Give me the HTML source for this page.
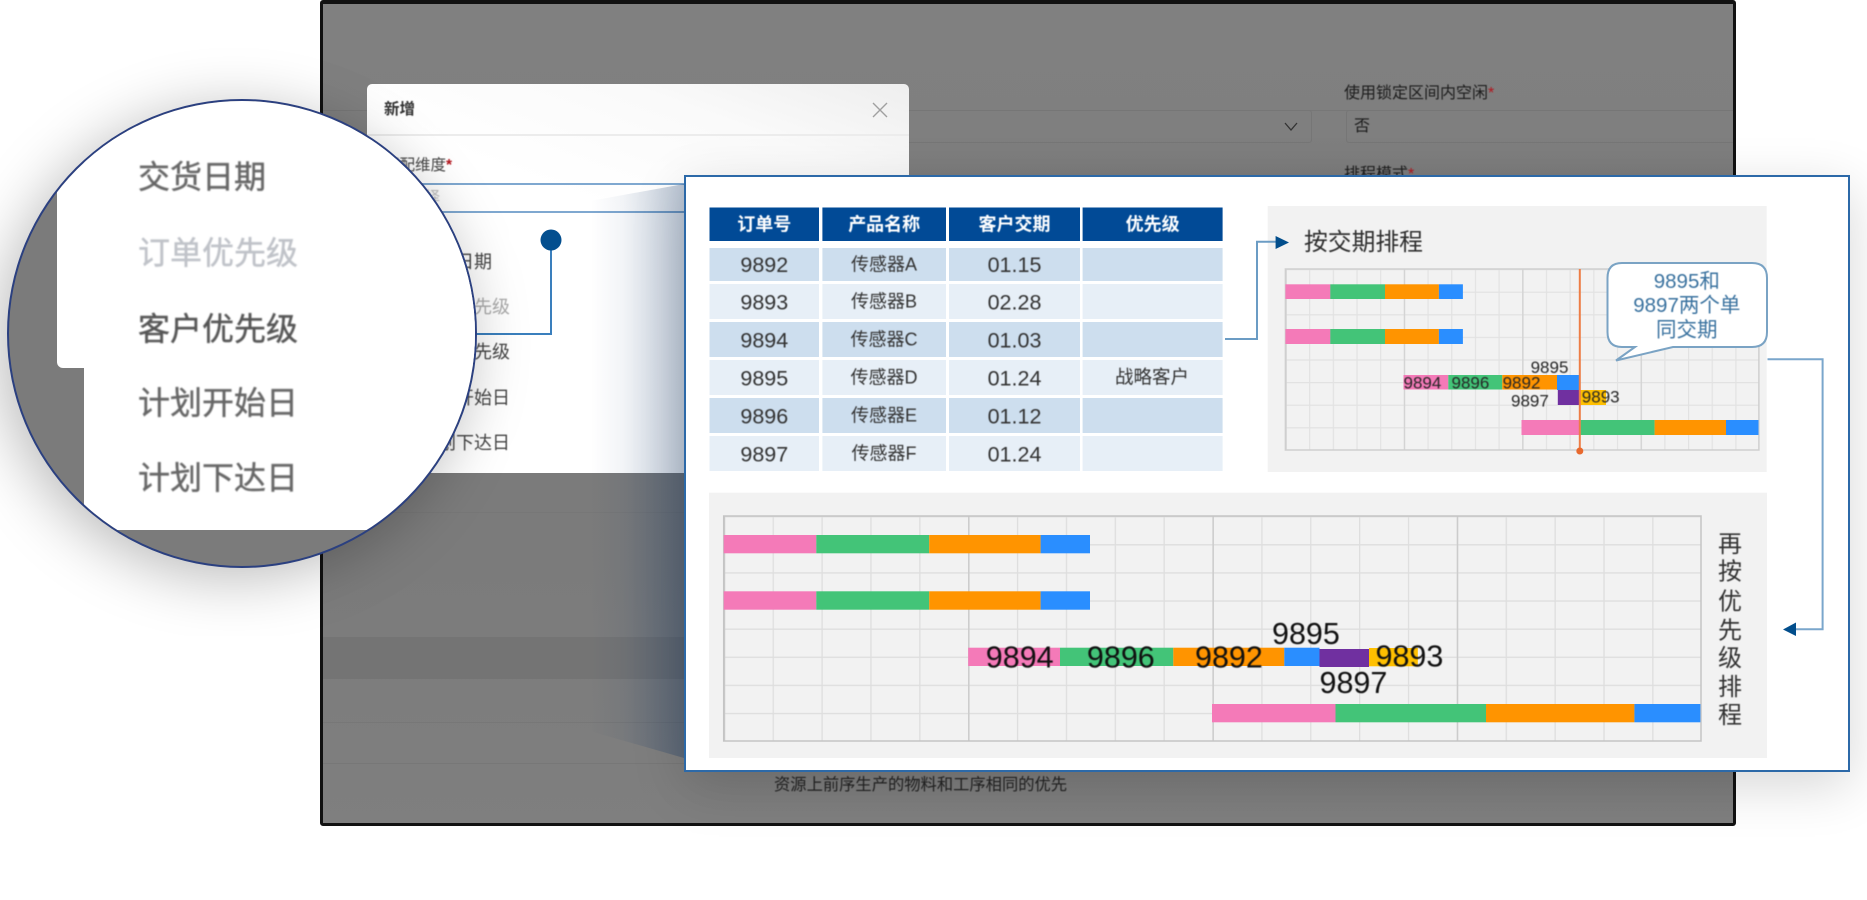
<!DOCTYPE html>
<html lang="zh-CN">
<head>
<meta charset="utf-8">
<title>排程</title>
<style>
html,body{margin:0;padding:0;background:#fff}
body{width:1867px;height:900px;position:relative;overflow:hidden;font-family:"Liberation Sans","Noto Sans CJK SC",sans-serif}
.abs{position:absolute}
#dark{left:320px;top:0;width:1416px;height:826px;box-sizing:border-box;border:3px solid #111;border-top-width:4px;border-radius:3px;background:linear-gradient(#808080 0,#7f7f7f 130px,#7a7a7a 200px,#7b7b7b 560px,#7f7f7f 826px);z-index:1;overflow:hidden}
.t{position:absolute;white-space:nowrap;line-height:1;filter:blur(.4px)}
.rs{color:#b3141c}
#modal{left:367px;top:84px;width:542px;height:389px;background:linear-gradient(200deg,#eeeeee 0,#fafafa 18%,#fff 40%);border-radius:5px 5px 0 0;z-index:2;overflow:hidden}
#funnel{left:0;top:0;z-index:3}
#circle{left:7px;top:99px;width:470px;height:469px;box-sizing:border-box;border:2.5px solid #2b4080;border-radius:50%;box-shadow:-8px 10px 60px rgba(0,0,0,.27);background:#7b7b7b;overflow:hidden;z-index:4}
.c{position:absolute;white-space:nowrap;line-height:1;font-size:32px;left:129px;filter:blur(.7px);-webkit-text-stroke:.4px currentColor}
#panel{left:684px;top:175px;width:1166px;height:597px;box-sizing:border-box;border:2px solid #2c69a8;background:#fff;box-shadow:0 14px 50px rgba(0,0,0,.16);z-index:6}
#art{left:0;top:0;z-index:7}
svg text{font-family:"Liberation Sans","Noto Sans CJK SC",sans-serif}
.blurred{filter:blur(.4px)}
</style>
</head>
<body>

<div id="dark" class="abs">
  <div class="abs" style="left:0;right:0;top:106px;height:1px;background:#777"></div>
  <div class="abs" style="left:0;right:0;top:633px;height:42px;background:#747474"></div>
  <div class="abs" style="left:0;right:0;top:508px;height:1px;background:#777"></div>
  <div class="abs" style="left:0;right:0;top:718px;height:1px;background:#777"></div>
  <div class="abs" style="left:0;right:0;top:759px;height:1px;background:#777"></div>
  <div class="t" style="left:1021px;top:82px;font-size:16px;color:#1c1c1c">使用锁定区间内空闲<span class="rs">*</span></div>
  <div class="abs" style="left:1023px;top:106px;width:500px;height:33px;box-sizing:border-box;border:1px solid #767676;border-radius:3px"></div>
  <div class="abs" style="left:570px;top:106px;width:419px;height:33px;box-sizing:border-box;border:1px solid #767676;border-radius:3px"></div>
  <svg class="abs" style="left:960px;top:117px" width="16" height="12"><path d="M2 2 L8 9 L14 2" fill="none" stroke="#333" stroke-width="1.3"/></svg>
  <div class="t" style="left:1031px;top:115px;font-size:16px;color:#1c1c1c">否</div>
  <div class="t" style="left:1021px;top:163px;font-size:16px;color:#1c1c1c">排程模式<span class="rs">*</span></div>
  <div class="t" style="left:451px;top:773px;font-size:16.3px;color:#222">资源上前序生产的物料和工序相同的优先</div>
</div>

<div id="modal" class="abs">
  <div class="t" style="left:17px;top:18px;font-size:15.5px;font-weight:bold;color:#333">新增</div>
  <svg class="abs" style="left:505px;top:18px" width="16" height="16"><path d="M1 1 L15 15 M15 1 L1 15" stroke="#a0a0a0" stroke-width="1.4"/></svg>
  <div class="abs" style="left:0;right:0;top:50px;height:2px;background:#ececec"></div>
  <div class="t" style="left:17px;top:74px;font-size:15.5px;color:#444">匹配维度<span class="rs" style="font-weight:bold">*</span></div>
  <div class="abs" style="left:17px;top:99px;width:520px;height:30px;box-sizing:border-box;border:2px solid #7fa8d0;border-radius:2px"></div>
  <div class="t" style="left:28px;top:106px;font-size:15px;color:#bbb">请选择</div>
  <div class="t" style="left:53px;top:169px;font-size:18px;color:#444">交货日期</div>
  <div class="t" style="left:53px;top:214px;font-size:18px;color:#aaa">订单优先级</div>
  <div class="t" style="left:53px;top:259px;font-size:18px;color:#444">客户优先级</div>
  <div class="t" style="left:53px;top:305px;font-size:18px;color:#444">计划开始日</div>
  <div class="t" style="left:53px;top:350px;font-size:18px;color:#444">计划下达日</div>
</div>

<svg id="funnel" class="abs" width="1867" height="900">
  <defs>
    <linearGradient id="fg" gradientUnits="userSpaceOnUse" x1="590" y1="0" x2="684" y2="0">
      <stop offset="0" stop-color="#002b63" stop-opacity="0"/>
      <stop offset=".35" stop-color="#002b63" stop-opacity=".05"/>
      <stop offset=".6" stop-color="#002b63" stop-opacity=".13"/>
      <stop offset="1" stop-color="#002b63" stop-opacity=".27"/>
    </linearGradient>
  </defs>
  <polygon points="684,184 590,201 590,731 684,758" fill="url(#fg)"/>
  <path d="M551 240 V334 H470" fill="none" stroke="#3a7fbd" stroke-width="2"/>
  <circle cx="551" cy="240" r="10.5" fill="#044f8f"/>
</svg>

<div id="circle" class="abs">
  <div class="abs" style="left:48px;top:-5px;width:440px;height:272px;background:#fff;border-radius:0 0 0 6px"></div>
  <div class="abs" style="left:75px;top:25px;width:420px;height:404px;background:#fff"></div>
  <div class="c" style="top:60px;color:#666">交货日期</div>
  <div class="c" style="top:136px;color:#bfc2c8">订单优先级</div>
  <div class="c" style="top:212px;color:#555">客户优先级</div>
  <div class="c" style="top:286px;color:#666">计划开始日</div>
  <div class="c" style="top:361px;color:#666">计划下达日</div>
</div>

<div id="panel" class="abs"></div>

<svg id="art" class="abs" width="1867" height="900">
  <defs>
    <pattern id="sg" patternUnits="userSpaceOnUse" x="1285.4" y="269" width="23.68" height="22.6">
      <path d="M0 0 V22.6 M0 0 H23.68" fill="none" stroke="#e2e2e2" stroke-width="2.4"/>
    </pattern>
    <pattern id="sg5" patternUnits="userSpaceOnUse" x="1285.4" y="269" width="118.4" height="181">
      <path d="M0 0 V181" fill="none" stroke="#d2d2d2" stroke-width="2.6"/>
    </pattern>
    <pattern id="bg" patternUnits="userSpaceOnUse" x="723.7" y="516" width="48.87" height="28.12">
      <path d="M0 0 V28.12 M0 0 H48.87" fill="none" stroke="#dedede" stroke-width="2.6"/>
    </pattern>
    <pattern id="bg5" patternUnits="userSpaceOnUse" x="723.7" y="516" width="244.35" height="225">
      <path d="M0 0 V225" fill="none" stroke="#cccccc" stroke-width="3"/>
    </pattern>
  </defs>

  <!-- table -->
  <g>
    <rect x="709.5" y="207.5" width="109.5" height="33.5" fill="#014a96"/>
    <rect x="822.4" y="207.5" width="123.6" height="33.5" fill="#014a96"/>
    <rect x="949" y="207.5" width="131" height="33.5" fill="#014a96"/>
    <rect x="1082.6" y="207.5" width="140" height="33.5" fill="#014a96"/>

    <g fill="#cddeee">
      <rect x="709.5" y="248" width="109.5" height="33"/><rect x="822.4" y="248" width="123.6" height="33"/><rect x="949" y="248" width="131" height="33"/><rect x="1082.6" y="248" width="140" height="33"/>
      <rect x="709.5" y="322" width="109.5" height="35"/><rect x="822.4" y="322" width="123.6" height="35"/><rect x="949" y="322" width="131" height="35"/><rect x="1082.6" y="322" width="140" height="35"/>
      <rect x="709.5" y="398" width="109.5" height="35"/><rect x="822.4" y="398" width="123.6" height="35"/><rect x="949" y="398" width="131" height="35"/><rect x="1082.6" y="398" width="140" height="35"/>
    </g>
    <g fill="#e7eff7">
      <rect x="709.5" y="284" width="109.5" height="35"/><rect x="822.4" y="284" width="123.6" height="35"/><rect x="949" y="284" width="131" height="35"/><rect x="1082.6" y="284" width="140" height="35"/>
      <rect x="709.5" y="360" width="109.5" height="35"/><rect x="822.4" y="360" width="123.6" height="35"/><rect x="949" y="360" width="131" height="35"/><rect x="1082.6" y="360" width="140" height="35"/>
      <rect x="709.5" y="436" width="109.5" height="35"/><rect x="822.4" y="436" width="123.6" height="35"/><rect x="949" y="436" width="131" height="35"/><rect x="1082.6" y="436" width="140" height="35"/>
    </g>

    <g class="blurred" text-anchor="middle" fill="#fff" font-size="18" font-weight="bold">
      <text x="764.3" y="230.5">订单号</text><text x="884.2" y="230.5">产品名称</text><text x="1014.5" y="230.5">客户交期</text><text x="1152.6" y="230.5">优先级</text>
    </g>
    <g class="blurred" text-anchor="middle" fill="#333" font-size="21.5">
      <text x="764.3" y="272">9892</text><text x="764.3" y="309.5">9893</text><text x="764.3" y="347.5">9894</text><text x="764.3" y="385.5">9895</text><text x="764.3" y="423.5">9896</text><text x="764.3" y="461.5">9897</text>
      <text x="1014.5" y="272">01.15</text><text x="1014.5" y="309.5">02.28</text><text x="1014.5" y="347.5">01.03</text><text x="1014.5" y="385.5">01.24</text><text x="1014.5" y="423.5">01.12</text><text x="1014.5" y="461.5">01.24</text>
    </g>
    <g class="blurred" text-anchor="middle" fill="#333" font-size="18">
      <text x="884" y="270.5">传感器A</text><text x="884" y="307.5">传感器B</text><text x="884" y="345.5">传感器C</text><text x="884" y="383.5">传感器D</text><text x="884" y="421.5">传感器E</text><text x="884" y="459.5">传感器F</text>
      <text x="1152" y="383.5" font-size="18.5">战略客户</text>
    </g>
  </g>

  <!-- top chart -->
  <rect x="1267.7" y="206" width="499" height="266" fill="#f2f2f2"/>
  <rect x="1285.4" y="269" width="473.5" height="181" fill="url(#sg)"/>
  <rect x="1285.4" y="269" width="473.5" height="181" fill="url(#sg5)"/>
  <rect x="1285.4" y="269" width="473.5" height="181" fill="none" stroke="#cfcfcf" stroke-width="1.5"/>
  <text class="blurred" x="1304" y="250" font-size="23.8" fill="#2e2e2e">按交期排程</text>

  <g>
    <rect x="1285.4" y="284.3" width="45" height="14.7" fill="#f47ab8"/><rect x="1330.3" y="284.3" width="54.7" height="14.7" fill="#43c478"/><rect x="1385" y="284.3" width="53.9" height="14.7" fill="#ff9400"/><rect x="1438.9" y="284.3" width="24" height="14.7" fill="#2a8eff"/>
    <rect x="1285.4" y="329" width="45" height="15" fill="#f47ab8"/><rect x="1330.3" y="329" width="54.7" height="15" fill="#43c478"/><rect x="1385" y="329" width="53.9" height="15" fill="#ff9400"/><rect x="1438.9" y="329" width="24" height="15" fill="#2a8eff"/>
    <rect x="1403.5" y="375" width="44.8" height="14.5" fill="#f47ab8"/><rect x="1448.3" y="375" width="54" height="14.5" fill="#43c478"/><rect x="1502.3" y="375" width="54.7" height="14.5" fill="#ff9400"/><rect x="1557" y="375" width="22.5" height="15" fill="#2a8eff"/>
    <rect x="1557.8" y="390" width="21.5" height="15" fill="#7030a0"/><rect x="1580.6" y="390" width="25.4" height="15" fill="#ffc000"/>
    <rect x="1521.5" y="420" width="59.1" height="15" fill="#f47ab8"/><rect x="1580.6" y="420" width="74" height="15" fill="#43c478"/><rect x="1654.6" y="420" width="71.4" height="15" fill="#ff9400"/><rect x="1726" y="420" width="32.5" height="15" fill="#2a8eff"/>
  </g>
  <path d="M1579.8 269 V451" stroke="#ed7d45" stroke-width="2"/>
  <circle cx="1579.8" cy="451" r="3.5" fill="#e8692e"/>
  <g class="blurred" font-size="17" fill="#262626">
    <text x="1530.6" y="373">9895</text>
    <text x="1511" y="406.7">9897</text>
    <text x="1403.5" y="388.7">9894</text>
    <text x="1451.5" y="388.7">9896</text>
    <text x="1502.6" y="388.7">9892</text>
    <text x="1581.8" y="402.7">9893</text>
  </g>

  <path d="M1622 263 H1752 Q1767 263 1767 278 V332 Q1767 347 1752 347 H1673 L1616 360.5 L1635 347 H1622 Q1607.5 347 1607.5 332 V278 Q1607.5 263 1622 263 Z" fill="#fff" stroke="#7aa3c4" stroke-width="2"/>
  <g class="blurred" text-anchor="middle" fill="#3a729f" font-size="20.5">
    <text x="1686.8" y="288">9895和</text>
    <text x="1686.8" y="312">9897两个单</text>
    <text x="1686.8" y="336.5">同交期</text>
  </g>

  <!-- bottom chart -->
  <rect x="709" y="492.7" width="1058" height="265.3" fill="#f2f2f2"/>
  <rect x="723.7" y="516" width="977.3" height="225" fill="url(#bg)"/>
  <rect x="723.7" y="516" width="977.3" height="225" fill="url(#bg5)"/>
  <rect x="723.7" y="516" width="977.3" height="225" fill="none" stroke="#c4c4c4" stroke-width="1.5"/>

  <g>
    <rect x="723.7" y="535" width="92.6" height="18.3" fill="#f47ab8"/><rect x="816.3" y="535" width="112.9" height="18.3" fill="#43c478"/><rect x="929.2" y="535" width="111.4" height="18.3" fill="#ff9400"/><rect x="1040.6" y="535" width="49.4" height="18.3" fill="#2a8eff"/>
    <rect x="723.7" y="591.3" width="92.6" height="18.4" fill="#f47ab8"/><rect x="816.3" y="591.3" width="112.9" height="18.4" fill="#43c478"/><rect x="929.2" y="591.3" width="111.4" height="18.4" fill="#ff9400"/><rect x="1040.6" y="591.3" width="49.4" height="18.4" fill="#2a8eff"/>
    <rect x="968.2" y="647.7" width="91.8" height="18.3" fill="#f47ab8"/><rect x="1060" y="647.7" width="113.3" height="18.3" fill="#43c478"/><rect x="1173.3" y="647.7" width="111" height="18.3" fill="#ff9400"/><rect x="1284.3" y="647.7" width="35.2" height="18.3" fill="#2a8eff"/>
    <rect x="1319.5" y="649" width="49.5" height="18" fill="#7030a0"/><rect x="1369" y="648" width="48.8" height="18.3" fill="#ffc000"/>
    <rect x="1212" y="704" width="123.5" height="18.3" fill="#f47ab8"/><rect x="1335.5" y="704" width="150.5" height="18.3" fill="#43c478"/><rect x="1486" y="704" width="148.4" height="18.3" fill="#ff9400"/><rect x="1634.4" y="704" width="66" height="18.3" fill="#2a8eff"/>
  </g>
  <g class="blurred" font-size="30.5" fill="#111">
    <text x="985.8" y="667.5">9894</text>
    <text x="1086.9" y="667.5">9896</text>
    <text x="1195" y="667.5">9892</text>
    <text x="1272" y="644">9895</text>
    <text x="1375.5" y="666.5">9893</text>
    <text x="1319.5" y="693">9897</text>
  </g>
  <g class="blurred" text-anchor="middle" font-size="24" fill="#333">
    <text x="1730" y="552">再</text><text x="1730" y="579.5">按</text><text x="1730" y="609.5">优</text><text x="1730" y="638.5">先</text><text x="1730" y="666">级</text><text x="1730" y="695">排</text><text x="1730" y="723">程</text>
  </g>

  <!-- connectors -->
  <path d="M1225 339 H1257 V241.7 H1276" fill="none" stroke="#6b9cc4" stroke-width="2"/>
  <polygon points="1275.6,236 1289,242.5 1275.6,249" fill="#024e8c"/>
  <path d="M1767.5 359.3 H1822.6 V629.3 H1795" fill="none" stroke="#7aa6cc" stroke-width="2"/>
  <polygon points="1796,622.5 1783,629.5 1796,636" fill="#024e8c"/>
</svg>

</body>
</html>
